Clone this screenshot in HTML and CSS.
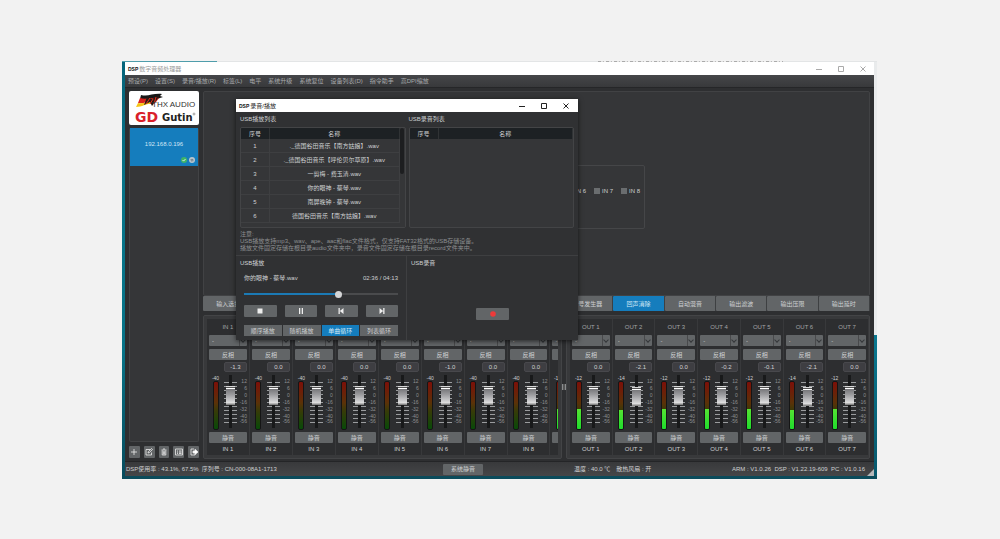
FILE: index.html
```html
<!DOCTYPE html>
<html lang="zh-CN">
<head>
<meta charset="utf-8">
<title>DSP 数字音频处理器</title>
<link rel="stylesheet" href="styles.css">
</head>
<body>
<div class="desktop">
  <div class="edge edge-left" aria-hidden="true"></div>
  <main class="app">
    <header class="titlebar">
      <span class="app-mark">DSP</span><h1 class="title-faded">数字音频处理器</h1>
      <div class="win-controls faded">
        <button type="button" aria-label="最小化"><svg viewBox="0 0 6 6"><path d="M0 3.5H6"/></svg></button>
        <button type="button" aria-label="最大化"><svg viewBox="0 0 6 6"><path d="M.5 .5H5.5V5.5H.5Z"/></svg></button>
        <button type="button" aria-label="关闭"><svg viewBox="0 0 6 6"><path d="M.5 .5L5.5 5.5M5.5 .5L.5 5.5"/></svg></button>
      </div>
    </header>
    <nav class="menubar">
      <a href="#">预设(P)</a><a href="#">设置(S)</a><a href="#">录音/播放(R)</a><a href="#">标签(L)</a><a href="#">电平</a><a href="#">系统升级</a><a href="#">系统复位</a><a href="#">设备列表(D)</a><a href="#">指令助手</a><a href="#">高DPI缩放</a>
    </nav>
    <div class="workspace">
      <aside class="sidebar">
        <div class="logo">
          <svg viewBox="0 0 70 34" role="img" aria-label="THX AUDIO Gutin">
            <path d="M12 4C19 6 24 2 33 3L31 5L34 6L28 8H11Z" fill="#171717"/>
            <path d="M11 7C17 9 22 6 30 7L27 11C20 9 16 13 9 12Z" fill="#d9221c"/>
            <path d="M9 12C15 13 20 10 26 11L23 13C18 12 14 16 7 16Z" fill="#f6c416"/>
            <path d="M18 6L23 8L31 4L27 10L23 15L21 11L15 14Z" fill="#2a1a13"/>
            <path d="M21 7L17 13M24 8L21 13M27 6L25 13" stroke="#e4301f" stroke-width="1"/>
            <text x="23" y="16" class="logo-thx">THX AUDIO</text>
            <text x="6" y="31" class="logo-gd">GD</text>
            <text x="33" y="30" class="logo-name">Gutin</text>
            <circle cx="65" cy="23" r="1" fill="none" stroke="#555" stroke-width=".5"/>
          </svg>
        </div>
        <div class="devices">
          <button type="button" class="device">
            <span class="device-ip">192.168.0.196</span>
            <span class="device-state">
              <svg viewBox="0 0 6 6"><circle cx="3" cy="3" r="3" fill="#3fb468"/><path d="M1.5 3L2.6 4.1L4.5 2" stroke="#fff" fill="none" stroke-width=".8"/></svg>
              <svg viewBox="0 0 6 6"><circle cx="3" cy="3" r="3" fill="#b9c6cf"/><path d="M1.5 2.5H4L3.3 1.8M4.5 3.7H2L2.7 4.4" stroke="#53616b" fill="none" stroke-width=".6"/></svg>
            </span>
          </button>
        </div>
        <div class="tools">
          <button type="button" aria-label="添加"><svg viewBox="0 0 10 10"><path d="M5 2V8M2 5H8"/></svg></button>
          <button type="button" aria-label="编辑"><svg viewBox="0 0 10 10"><path d="M6 2.5H2V8H7.5V5.5M4 6L4.3 4.8L7.5 1.5L8.5 2.5L5.2 5.7Z"/></svg></button>
          <button type="button" aria-label="删除"><svg viewBox="0 0 10 10"><path d="M2.5 3H7.5M4 2H6M3.2 3.5V8H6.8V3.5M4.4 4.2V7.5M5.6 4.2V7.5"/></svg></button>
          <button type="button" aria-label="列表"><svg viewBox="0 0 10 10"><path d="M1.5 2H8.5V8H1.5ZM3 4H4M5 4H7.5M3 5.2H4M5 5.2H7.5M3 6.5H4M5 6.5H7.5"/></svg></button>
          <button type="button" aria-label="导出"><svg viewBox="0 0 10 10"><path d="M5 2H2V8H6V7"/><path d="M4 4H6V2.3L9 5L6 7.5V6H4Z" fill="#fff"/></svg></button>
        </div>
      </aside>
      <section class="content">
        <div class="stage">
          <fieldset class="inputs" id="inputs"></fieldset>
        </div>
        <nav class="tabs" id="tabs"></nav>
        <div class="mixer">
          <div class="bank bank-in" id="bank-in"></div>
          <div class="splitter" aria-hidden="true"></div>
          <div class="bank bank-out" id="bank-out"></div>
        </div>
      </section>
    </div>
    <footer class="status">
      <div class="status-left"><span>DSP使用率 : 43.1%, 67.5%</span><span>序列号 : CN-000-08A1-1713</span></div>
      <div><button type="button" class="btn system-mute">系统静音</button></div>
      <div class="status-mid"><span>温度 : 40.0 ℃</span><span>散热风扇 : 开</span></div>
      <div class="versions">ARM : V1.0.26&nbsp; DSP : V1.22.19-609&nbsp; PC : V1.0.16</div>
      <svg class="grip" viewBox="0 0 7 7" aria-hidden="true"><path d="M7 0V7H0Z" fill="#b5b7b9"/></svg>
    </footer>
  </main>
  <div class="edge edge-right" aria-hidden="true"></div>

  <section class="dialog" role="dialog" aria-labelledby="dialog-title">
    <header class="titlebar">
      <span class="app-mark">DSP</span><h2 id="dialog-title">录音/播放</h2>
      <div class="win-controls">
        <button type="button" aria-label="最小化"><svg viewBox="0 0 6 6"><path d="M0 3.5H6"/></svg></button>
        <button type="button" aria-label="最大化"><svg viewBox="0 0 6 6"><path d="M.5 .5H5.5V5.5H.5Z"/></svg></button>
        <button type="button" aria-label="关闭"><svg viewBox="0 0 6 6"><path d="M.5 .5L5.5 5.5M5.5 .5L.5 5.5"/></svg></button>
      </div>
    </header>
    <div class="lists">
      <div>
        <h3>USB播放列表</h3>
        <div class="list">
          <table>
            <thead><tr><th>序号</th><th>名称</th></tr></thead>
            <tbody>
              <tr><td>1</td><td>._德国谷田音乐【南方姑娘】.wav</td></tr>
              <tr><td>2</td><td>._德国谷田音乐【呼伦贝尔草原】.wav</td></tr>
              <tr><td>3</td><td>一剪梅 - 费玉清.wav</td></tr>
              <tr><td>4</td><td>你的眼神 - 蔡琴.wav</td></tr>
              <tr><td>5</td><td>南屏晚钟 - 蔡琴.wav</td></tr>
              <tr><td>6</td><td>德国谷田音乐【南方姑娘】.wav</td></tr>
            </tbody>
          </table>
          <div class="scrollbar"><span></span></div>
        </div>
      </div>
      <div>
        <h3>USB录音列表</h3>
        <div class="list">
          <table><thead><tr><th>序号</th><th>名称</th></tr></thead></table>
        </div>
      </div>
    </div>
    <p class="note">注意:<br>USB播放支持mp3、wav、ape、aac和flac文件格式，仅支持FAT32格式的USB存储设备。<br>播放文件固定存储在根目录audio文件夹中，录音文件固定存储在根目录record文件夹中。</p>
    <div class="decks">
      <div class="deck player">
        <h3>USB播放</h3>
        <div class="track"><span>你的眼神 - 蔡琴.wav</span><span>02:36 / 04:13</span></div>
        <input type="range" class="seek" aria-label="播放进度" min="0" max="100" value="62">
        <div class="transport">
          <button type="button" class="btn" aria-label="停止"><svg viewBox="0 0 8 8"><path d="M1.5 1.5H6.5V6.5H1.5Z"/></svg></button>
          <button type="button" class="btn" aria-label="暂停"><svg viewBox="0 0 8 8"><path d="M2 1H3.3V7H2ZM4.7 1H6V7H4.7Z"/></svg></button>
          <button type="button" class="btn" aria-label="上一首"><svg viewBox="0 0 8 8"><path d="M1.5 1H2.8V7H1.5ZM6.5 1V7L2.8 4Z"/></svg></button>
          <button type="button" class="btn" aria-label="下一首"><svg viewBox="0 0 8 8"><path d="M5.2 1H6.5V7H5.2ZM1.5 1V7L5.2 4Z"/></svg></button>
        </div>
        <div class="modes">
          <button type="button">顺序播放</button><button type="button">随机播放</button><button type="button" class="active">单曲循环</button><button type="button">列表循环</button>
        </div>
      </div>
      <div class="deck recorder">
        <h3>USB录音</h3>
        <button type="button" class="btn record" aria-label="录音"><svg viewBox="0 0 8 8"><circle cx="4" cy="4" r="2.8" fill="#ee3a3a"/></svg></button>
      </div>
    </div>
  </section>
</div>
<script src="app.js"></script>
</body>
</html>
```

FILE: styles.css
```css
* { box-sizing: border-box; }

body {
  margin: 0;
  min-height: 100vh;
  padding: 61px 123px 60px 122px;
  display: flex;
  background: #f2f2f2;
  color: #ced0d2;
  font-family: "Liberation Sans", "Noto Sans CJK SC", sans-serif;
  font-size: 6px;
  line-height: 8px;
}

h1, h2, h3, p { margin: 0; font-size: 6px; font-weight: 400; }
button, input, select { margin: 0; padding: 0; border: 0; font: inherit; color: inherit; }
button { display: block; background: none; }
a { color: inherit; text-decoration: none; }
svg { display: block; }

.desktop {
  position: relative;
  flex: 1;
  min-width: 0;
  display: flex;
  padding: 1px 0 3px;
  background: linear-gradient(90deg, #4f9dab 95px, #e3e5e6 95px) top / 100% 1px no-repeat, #0b4b5b;
}
.desktop::before {
  content: "";
  position: absolute;
  top: 0;
  left: 63%;
  width: 185px;
  height: 1px;
  background: repeating-linear-gradient(90deg, #aaa 0 3px, #e3e3e3 3px 5px, #bbb 5px 6px, #eee 6px 8px);
}
.edge { flex: none; width: 3px; }
.edge-left { background: linear-gradient(#06647a, #087488 30%, #087387 70%, #064c5d); }
.edge-right { background: linear-gradient(#e9ebec 66%, #0a7890 66%, #08586c); }

.app { flex: 1; min-width: 0; display: flex; flex-direction: column; background: #2e2f31; }

.titlebar {
  display: flex;
  align-items: center;
  gap: 1px;
  height: 13px;
  padding: 0 8px 0 3px;
  background: #fff;
  color: #222;
}
.app-mark { font: 700 5px/8px "Liberation Sans", sans-serif; color: #111; }
.title-faded { color: #999; }
.win-controls { margin-left: auto; display: flex; gap: 16px; color: #222; }
.win-controls.faded { color: #aaa; }
.win-controls svg { width: 6px; height: 6px; fill: none; stroke: currentColor; stroke-width: 1; }

.menubar {
  display: flex;
  align-items: center;
  gap: 7px;
  height: 13px;
  padding: 0 3px;
  border-bottom: 1px solid #252628;
  background: linear-gradient(#454649, #38393b);
  color: #a9abad;
  white-space: nowrap;
}

.workspace { flex: 1; display: flex; gap: 4px; padding: 3px 4px 2px; }
.sidebar { flex: none; width: 70px; display: flex; flex-direction: column; padding-bottom: 1px; }
.logo { height: 34px; border-radius: 2px; background: #fff; }
.logo-thx { font: 8px "Liberation Sans", sans-serif; fill: #333; }
.logo-gd { font: 700 14px "DejaVu Sans", sans-serif; fill: #d9202a; }
.logo-name { font: 700 10px "DejaVu Sans", sans-serif; fill: #222; }
.devices { flex: 1; margin: 3px 0 4px; border: 1px solid #424345; border-top: 0; border-radius: 2px; background: #353638; }
.device {
  width: 100%;
  height: 38px;
  padding: 12px 3px 3px;
  background: #157dbd;
  color: #d0e6f5;
  display: flex;
  flex-direction: column;
  justify-content: space-between;
}
.device-ip { align-self: center; }
.device-state { align-self: flex-end; display: flex; gap: 2px; }
.device-state svg { width: 6px; height: 6px; }
.tools { display: grid; grid-template-columns: repeat(5, 1fr); gap: 4px; }
.tools button { height: 12px; display: grid; place-items: center; border-radius: 1px; background: #626567; }
.tools svg { width: 10px; height: 10px; fill: none; stroke: #eee; stroke-width: .8; }

.content { flex: 1; min-width: 0; display: flex; flex-direction: column; }
.stage {
  flex: 1;
  display: grid;
  place-items: center;
  padding-top: 6px;
  border: 1px solid #414244;
  border-radius: 2px;
  background: #353638;
}
.inputs {
  display: flex;
  align-items: center;
  gap: 4px;
  height: 64px;
  margin: 0;
  padding: 0 0 12px 3px;
  border: 1px solid #454648;
  border-radius: 2px;
}
.inputs label { display: flex; align-items: center; gap: 2px; width: 23px; white-space: nowrap; }
.inputs input { appearance: none; flex: none; width: 6px; height: 6px; background: #6a6d6f; }

.tabs { display: grid; grid-auto-flow: column; grid-auto-columns: 1fr; height: 15px; margin-bottom: 4px; }
.tabs button {
  border-right: 1px solid #3e4042;
  border-radius: 1px;
  background: #626567;
  white-space: nowrap;
}
.tabs .active, .modes .active { background: #157dbd; color: #d3e8f6; }

.mixer { display: flex; }
.bank {
  display: grid;
  padding: 3px 2px 3px 3px;
  border: 1px solid #434446;
  border-radius: 2px;
  background: #38393b;
  min-width: 0;
}
.bank-in { flex: 358; grid-template-columns: repeat(8, 5fr) 1fr; }
.bank-out { flex: 304; grid-template-columns: repeat(7, 1fr); padding-right: 0; }
.splitter { flex: none; width: 4px; align-self: center; height: 6px; border: solid #8a8c8e; border-width: 0 1px; background: #555; }

.strip {
  min-width: 0;
  overflow: hidden;
  padding: 3px 2px 0;
  border-right: 1px solid #38393b;
  background: #2d2e30;
}
.strip-body { min-width: 37px; display: flex; flex-direction: column; }
.strip-name { height: 10px; margin-bottom: 3px; line-height: 10px; text-align: center; color: #a2a4a6; }
.strip-label { height: 12px; line-height: 12px; text-align: center; }
.btn { height: 11px; border-radius: 1px; background: #626567; line-height: 10px; text-align: center; }
.pick { position: relative; display: block; height: 11px; margin-bottom: 3px; }
.pick select { appearance: none; display: block; width: 100%; height: 11px; padding-left: 3px; border-radius: 1px; background: linear-gradient(270deg, #626567 7px, #48494b 7px 8px, #626567 8px); }
.pick::after {
  content: "";
  position: absolute;
  right: 2px;
  top: 3px;
  width: 3px;
  height: 3px;
  border: solid #35373a;
  border-width: 0 1px 1px 0;
  transform: rotate(45deg);
}
.gain {
  align-self: flex-end;
  width: 23px;
  height: 10px;
  margin-top: 2px;
  border: 1px solid #48484c;
  border-radius: 2px;
  background: #3e3e42;
  line-height: 8px;
  text-align: center;
}
.levels { display: grid; grid-template-columns: 13px 17px 1fr; height: 60px; padding-top: 3px; }
.level { display: flex; flex-direction: column; align-items: center; font-size: 5px; line-height: 6px; }
.meter {
  display: flex;
  align-items: flex-end;
  width: 6px;
  height: 49px;
  border: 1px solid #151515;
  border-radius: 2px;
  overflow: hidden;
  background: linear-gradient(#7d0f08, #5a3208 45%, #3a3a08 60%, #084a08);
}
.meter span { width: 100%; background: linear-gradient(#55e233, #1fdc2c); }
.fader-box {
  display: flex;
  justify-content: center;
  background: repeating-linear-gradient(#9a9c9e 0 1px, transparent 1px 4px) 50% 7px / 13px 41px no-repeat;
}
.fader {
  appearance: none;
  writing-mode: vertical-lr;
  direction: rtl;
  width: 9px;
  height: 53px;
  background: linear-gradient(90deg, transparent 3px, #18191a 3px 6px, transparent 6px);
}
.fader::-webkit-slider-thumb {
  appearance: none;
  width: 9px;
  height: 19px;
  border: 0;
  background: linear-gradient(#d8d8d8 0 1px, #555 1px 2px, #fff 2px 3px, #77777a 3px, #97979a 8px, #c6c6c8 14px, #e2e2e2 17px, #888 18px);
}
.scale { display: flex; flex-direction: column; gap: 1px; padding-top: 3px; font-size: 5px; line-height: 6px; text-align: right; color: #8d8f91; }
.scale span:last-child { line-height: 4px; margin-top: -1px; }

.status {
  position: relative;
  display: grid;
  grid-template-columns: 317fr 131fr 158fr 133fr;
  align-items: center;
  height: 15px;
  padding: 0 9px 0 1px;
  border-top: 1px solid #242527;
  background: linear-gradient(#38393b, #454648);
  white-space: nowrap;
}
.status-left { display: flex; gap: 3px; }
.status-mid { display: flex; gap: 6px; }
.system-mute { width: 40px; }
.versions { justify-self: end; }
.grip { position: absolute; right: 0; bottom: 0; width: 7px; height: 7px; }

.dialog {
  position: absolute;
  left: 114px;
  top: 38px;
  width: 342px;
  background: #303133;
  box-shadow: 0 1px 5px rgba(0, 0, 0, .65);
}
.dialog .titlebar { padding-right: 9px; }
.lists { display: grid; grid-template-columns: 1fr 1fr; gap: 3px; padding: 0 4px; }
.lists h3 { height: 15px; line-height: 14px; }
.list { display: flex; align-items: flex-start; height: 101px; border: 1px solid #434446; border-radius: 2px; background: #353638; overflow: hidden; }
.list table { flex: 1; table-layout: fixed; width: 100%; border-spacing: 0; text-align: center; }
.list th { height: 11px; padding: 0; border-right: 1px solid #303335; background: #1d2124; font-weight: 400; line-height: 8px; }
.list th:first-child { width: 29px; }
.list td { height: 14px; padding: 0; border: solid #3e3f41; border-width: 0 1px 1px 0; line-height: 8px; white-space: nowrap; }
.scrollbar { align-self: stretch; flex: none; width: 5px; background: #353638; }
.scrollbar span { display: block; width: 4px; height: 46px; border-radius: 2px; background: #1d1e20; }
.note { padding: 3px 4px; line-height: 7px; color: #8d8f91; white-space: nowrap; }
.decks { display: grid; grid-template-columns: 1fr 1fr; border-top: 1px solid #3e3f41; }
.deck { padding: 3px 4px 4px; }
.deck h3 { line-height: 9px; }
.player { padding-right: 8px; border-right: 1px solid #3e3f41; }
.track, .seek, .transport, .modes { margin-left: 4px; }
.track { display: flex; justify-content: space-between; margin-top: 6px; }
.seek {
  appearance: none;
  display: block;
  width: calc(100% - 4px);
  height: 8px;
  margin-top: 8px;
  background: linear-gradient(90deg, #1b7ab5 61%, #4a4b4d 61%) center / 100% 2px no-repeat;
}
.seek::-webkit-slider-thumb { appearance: none; width: 7px; height: 7px; border-radius: 50%; background: #d4d5d6; }
.transport { display: grid; grid-template-columns: repeat(4, 1fr); gap: 8px; margin-top: 7px; }
.transport .btn, .record { height: 12px; display: grid; place-items: center; }
.transport svg, .record svg { width: 8px; height: 8px; fill: #eee; }
.modes { display: grid; grid-template-columns: repeat(4, 1fr); gap: 1px; margin-top: 8px; }
.modes button { height: 11px; background: #626567; line-height: 10px; white-space: nowrap; }
.recorder { display: flex; flex-direction: column; }
.record { width: 33px; margin: 40px auto 0; }
```

FILE: app.js
```js
const tabs = ['输入选择', '输入滤波', '输入压限', '输入延时', '噪声门', '反馈抑制', '矩阵混音',
  '信号发生器', '回声消除', '自动混音', '输出滤波', '输出压限', '输出延时'];
document.getElementById('tabs').innerHTML = tabs
  .map(t => `<button type="button"${t === '回声消除' ? ' class="active"' : ''}>${t}</button>`).join('');

document.getElementById('inputs').innerHTML = [1, 2, 3, 4, 5, 6, 7, 8]
  .map(n => `<label><input type="checkbox">IN ${n}</label>`).join('');

const scale = ['12', '6', '0', '-16', '-32', '-40', '-56'].map(s => `<span>${s}</span>`).join('');

function strip([name, gain, peak, fill]) {
  const pos = 69 + Math.round(parseFloat(gain) * 1.5);
  return `<div class="strip"><div class="strip-body">
    <div class="strip-name">${name}</div>
    <span class="pick"><select aria-label="${name} 编组"><option>-</option></select></span>
    <button type="button" class="btn">反相</button>
    <div class="gain">${gain}</div>
    <div class="levels">
      <div class="level">${peak}<div class="meter"><span style="height:${fill}%"></span></div></div>
      <div class="fader-box"><input type="range" class="fader" aria-label="${name} 增益" min="0" max="100" value="${pos}"></div>
      <div class="scale">${scale}</div>
    </div>
    <button type="button" class="btn">静音</button>
    <div class="strip-label">${name}</div>
  </div></div>`;
}

const inGains = ['-1.3', '0.0', '0.0', '0.0', '0.0', '-1.0', '0.0', '0.0'];
const ins = inGains.map((g, i) => [`IN ${i + 1}`, g, '-40', 0]);
ins.push(['USB', '0.0', '-130', 42]);
document.getElementById('bank-in').innerHTML = ins.map(strip).join('');

const outGains = ['0.0', '-2.1', '0.0', '-0.2', '-0.1', '-2.1', '0.0'];
document.getElementById('bank-out').innerHTML = outGains
  .map((g, i) => strip([`OUT ${i + 1}`, g, g === '-2.1' ? '-14' : '-12', g === '-2.1' ? 40 : 43])).join('');
```
